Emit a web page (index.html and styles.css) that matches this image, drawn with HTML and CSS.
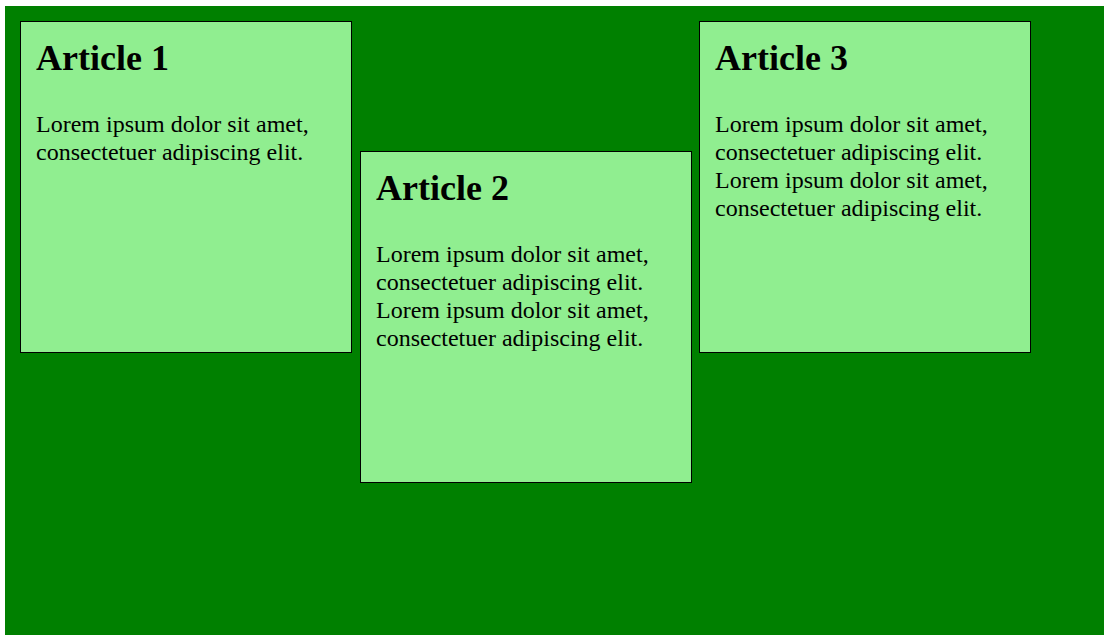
FILE: index.html
```html
<!DOCTYPE html>
<html>
<head>
<meta charset="utf-8">
<link rel="stylesheet" href="styles.css">
</head>
<body>
<div class="board">
  <article class="card">
    <h1 class="card-title">Article 1</h1>
    <p class="card-text">Lorem ipsum dolor sit amet, consectetuer adipiscing elit.</p>
  </article>
  <article class="card card-low">
    <h1 class="card-title">Article 2</h1>
    <p class="card-text">Lorem ipsum dolor sit amet, consectetuer adipiscing elit. Lorem ipsum dolor sit amet, consectetuer adipiscing elit.</p>
  </article>
  <article class="card card-last">
    <h1 class="card-title">Article 3</h1>
    <p class="card-text">Lorem ipsum dolor sit amet, consectetuer adipiscing elit. Lorem ipsum dolor sit amet, consectetuer adipiscing elit.</p>
  </article>
</div>
</body>
</html>
```
FILE: styles.css
```css
html, body {
  margin: 0;
  padding: 0;
  background: #ffffff;
}
body {
  padding: 6px 5px 9px 5px;
  font-family: "Liberation Serif", "Times New Roman", serif;
}
.board {
  background: #008000;
  width: 1099px;
  height: 629px;
  box-sizing: border-box;
  padding: 15px;
  display: flex;
  align-items: flex-start;
}
.card {
  box-sizing: border-box;
  width: 332px;
  height: 332px;
  background: #90ee90;
  border: 1px solid #000;
  padding: 15px;
  font-size: 24px;
  color: #000;
}
.card-low {
  margin-top: 130px;
  margin-left: 8px;
}
.card-last {
  margin-left: 7px;
}
.card-title {
  font-size: 36px;
  font-weight: bold;
  margin: 0 0 31px 0;
}
.card-text {
  margin: 0;
  line-height: 28px;
}
```
